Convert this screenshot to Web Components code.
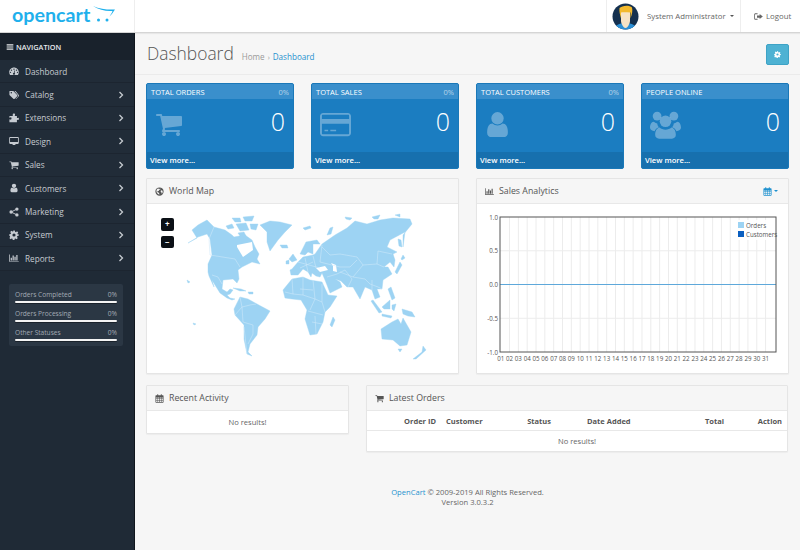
<!DOCTYPE html>
<html lang="en">
<head>
<meta charset="utf-8">
<title>Dashboard</title>
<style>
  html, body { margin: 0; height: 100%; overflow: hidden; }
  body { background: #f6f6f6; font: 7.6px "Open Sans", sans-serif; color: #666; }
</style>
</head>
<body>
<oc-app>
  <oc-header slot="header"></oc-header>
  <oc-sidebar slot="side">
    <nav-item icon="dashboard" plain>Dashboard</nav-item>
    <nav-item icon="tags">Catalog</nav-item>
    <nav-item icon="puzzle">Extensions</nav-item>
    <nav-item icon="desktop">Design</nav-item>
    <nav-item icon="cart">Sales</nav-item>
    <nav-item icon="user">Customers</nav-item>
    <nav-item icon="share">Marketing</nav-item>
    <nav-item icon="cog">System</nav-item>
    <nav-item icon="chart">Reports</nav-item>
    <stat-box slot="stats">
      <stat-row label="Orders Completed"></stat-row>
      <stat-row label="Orders Processing"></stat-row>
      <stat-row label="Other Statuses"></stat-row>
    </stat-box>
  </oc-sidebar>
  <page-head></page-head>
  <oc-dash>
    <oc-tile slot="tiles" heading="TOTAL ORDERS" percent="0%" icon="cart" size="28"></oc-tile>
    <oc-tile slot="tiles" heading="TOTAL SALES" percent="0%" icon="card" size="31"></oc-tile>
    <oc-tile slot="tiles" heading="TOTAL CUSTOMERS" percent="0%" icon="user" size="29" shift="-2"></oc-tile>
    <oc-tile slot="tiles" heading="PEOPLE ONLINE" icon="users" size="31"></oc-tile>
    <oc-panel slot="mid" heading="World Map" icon="globe"><world-map></world-map></oc-panel>
    <oc-panel slot="mid" heading="Sales Analytics" icon="chart" range><sales-chart></sales-chart></oc-panel>
    <oc-panel slot="left" heading="Recent Activity" icon="calendar"><no-results></no-results></oc-panel>
    <oc-panel slot="right" heading="Latest Orders" icon="cart"><orders-table></orders-table></oc-panel>
  </oc-dash>
  <oc-footer></oc-footer>
</oc-app>

<script>
const ICONS = {
  bars: '<path d="M2 4h20v3.6H2zM2 10.2h20v3.6H2zM2 16.4h20v3.6H2z"/>',
  dashboard: '<path fill-rule="evenodd" d="M12 3.500C5.600 3.500.5 8.700.5 15c0 2.200.6 4.200 1.700 6 .2.300.5.500.9.500h17.800c.4 0 .7-.2.900-.5 1.100-1.800 1.700-3.800 1.700-6 0-6.300-5.100-11.500-11.500-11.500zM12 6a1.600 1.600 0 1 1 0 3.200A1.600 1.600 0 0 1 12 6zM6 8.300a1.600 1.600 0 1 1 0 3.200 1.600 1.600 0 0 1 0-3.200zm12 0a1.600 1.600 0 1 1 0 3.200 1.600 1.600 0 0 1 0-3.200zM3.600 13.500a1.600 1.600 0 1 1 0 3.200 1.600 1.600 0 0 1 0-3.200zm16.800 0a1.600 1.600 0 1 1 0 3.200 1.600 1.600 0 0 1 0-3.200zM12.900 10.500l1.700.5-1.300 5.200c.8.500 1.200 1.300 1.200 2.300 0 1.400-1.100 2.500-2.500 2.500s-2.500-1.100-2.500-2.500 1-2.400 2.300-2.500z"/>',
  tags: '<path fill-rule="evenodd" d="M1 3.500v7.200c0 .7.300 1.300.7 1.700l8.700 8.700c.9.900 2.300.9 3.200 0l6-6c.9-.9.900-2.300 0-3.200L11 3.200c-.5-.4-1.100-.7-1.700-.7H2c-.6 0-1 .4-1 1zM5.500 5a1.800 1.800 0 1 1 0 3.600 1.800 1.800 0 0 1 0-3.600z"/><path d="M13 2.500h1.500c.7 0 1.300.3 1.700.7l7.300 8.700c.7.900.7 2.200 0 3.100l-5.800 6c-.6.600-1.300.7-2.200.5l5.700-6.100c1-1.100 1-2.500 0-3.600z"/>',
  puzzle: '<path d="M9 3.500c0-1.300 1.300-2.200 2.800-2.200s2.800.9 2.800 2.200c0 .9-.9 1.500-.9 2.400 0 .6.500 1 1.300 1H19v4c0 .8.400 1.200 1 1.200.9 0 1.300-.8 2.200-.8 1 0 1.600 1.200 1.600 2.700s-.6 2.700-1.600 2.700c-.9 0-1.300-.8-2.200-.8-.6 0-1 .4-1 1.200V22H1v-5.700c0-.8.400-1.300 1-1.300.9 0 1.300.9 2.200.9 1.100 0 1.800-1.200 1.800-2.700S5.300 10.400 4.200 10.400c-.9 0-1.300.9-2.200.9-.6 0-1-.5-1-1.300V6.900h7c.8 0 1.300-.4 1.300-1 0-.9-.3-1.500-.3-2.400z"/>',
  desktop: '<path fill-rule="evenodd" d="M2.500 2.500h19c1.100 0 2 .9 2 2v12.500c0 1.100-.9 2-2 2H15c0 .9.300 1.500 1 2.500H8c.7-1 1-1.600 1-2.500H2.500c-1.100 0-2-.9-2-2V4.500c0-1.100.9-2 2-2zM2.500 4.500v10h19v-10z"/>',
  cart: '<path transform="scale(.0134)" d="M704 1536q0 52-38 90t-90 38-90-38-38-90 38-90 90-38 90 38 38 90zm896 0q0 52-38 90t-90 38-90-38-38-90 38-90 90-38 90 38 38 90zm128-1088v512q0 24-16.500 42.500t-40.500 21.500l-1044 122q13 60 13 70 0 16-24 64h920q26 0 45 19t19 45-19 45-45 19h-1024q-26 0-45-19t-19-45q0-11 8-31.500t16-36 21.500-40 15.500-29.500l-177-823h-204q-26 0-45-19t-19-45 19-45 45-19h256q16 0 28.500 6.500t19.500 15.500 13 24.500 8 26 5.500 29.500 4.500 26h1201q26 0 45 19t19 45z"/>',
  user: '<path transform="scale(.0134)" d="M1536 1399q0 109-62.500 187t-150.500 78h-854q-88 0-150.500-78t-62.500-187q0-85 8.500-160.500t31.500-152 58.500-131 94-89 134.500-34.500q131 128 313 128t313-128q76 0 134.500 34.500t94 89 58.500 131 31.500 152 8.500 160.500zm-256-887q0 159-112.500 271.500t-271.500 112.500-271.500-112.500-112.500-271.500 112.500-271.500 271.500-112.500 271.500 112.500 112.500 271.500z"/>',
  share: '<circle cx="19" cy="5" r="4"/><circle cx="19" cy="19" r="4"/><circle cx="5" cy="12" r="4"/><path d="M5 12 19 5M5 12l14 7" stroke="currentColor" stroke-width="2.2"/>',
  cog: '<path fill-rule="evenodd" d="M10 1h4l.6 3.300 1.900.8 2.800-1.900 2.800 2.800-1.900 2.800.8 1.900L23.300 10v4l-3.300.6-.8 1.900 1.900 2.800-2.800 2.800-2.800-1.900-1.900.8-.6 3.300h-4l-.6-3.300-1.900-.8-2.800 1.900-2.800-2.800 1.900-2.800-.8-1.900L.7 14v-4L4 9.400l.8-1.900-1.900-2.800 2.800-2.800 2.800 1.900 1.900-.8zM12 8.200a3.800 3.800 0 1 0 0 7.600 3.800 3.800 0 0 0 0-7.600z"/>',
  chart: '<path d="M.5 3.500h1.800v16h21.200v1.800H.5zM4 11.500h3v6.800H4zM8.500 6h3v12.300h-3zM13 9h3v9.300h-3zM17.500 4.500h3v13.800h-3z"/>',
  globe: '<path fill-rule="evenodd" d="M12 1a11 11 0 1 0 0 22 11 11 0 0 0 0-22zM8 3.700c1.500.3 2.700 1.100 3.500 1.400.8.200 1.800-.6 2.900-.3 1 .4.400 1.500-.7 2-1.200.5-2.700.4-3.200 1.400-.5 1 .5 1.800-.3 2.500-.9.700-2.300-.4-3.300.3-1 .7-.7 2.200.2 3 1 .8 2.500.2 3.400 1 .8.800.3 2 .9 3 .6 1 1.100 1.800.5 2.300-3.800-.6-7.200-3.600-7.800-7.500C3.300 8.600 5 5 8 3.700zm9.600 5c1-.5 2 .1 2.600 1.800.6 1.800.4 4-.5 5.800-.5 1-1.700 1.300-2.200.4-.5-.9.100-2-.5-3-.6-1-2-1-2.200-2.100-.2-1.100 1.400-2.300 2.800-2.900z"/>',
  calendar: '<path fill-rule="evenodd" d="M6 .8h2.500V3h7V.8H18V3h3c1 0 1.800.8 1.800 1.800v16.500c0 1-.8 1.800-1.800 1.800H3c-1 0-1.800-.8-1.800-1.800V4.800C1.200 3.800 2 3 3 3h3zM3.200 9v3h3.600V9zm5 0v3h3V9zm4.600 0v3h3V9zm4.600 0v3h3.400V9zM3.200 13.300v3h3.600v-3zm5 0v3h3v-3zm4.600 0v3h3v-3zm4.600 0v3h3.400v-3zM3.200 17.600v3.400h3.600v-3.400zm5 0v3.400h3v-3.400zm4.600 0v3.400h3v-3.400zm4.600 0v3.400h3.400v-3.400z"/>',
  signout: '<path d="M9.500 3.500v2.200H4c-.8 0-1.300.5-1.300 1.300v10c0 .8.500 1.300 1.300 1.300h5.500v2.200H4c-2 0-3.500-1.500-3.500-3.500V7c0-2 1.500-3.500 3.500-3.500zM15 5.500 23.500 12 15 18.500V15H8V9h7z"/>',
  card: '<path fill-rule="evenodd" d="M2.500 3h19C22.900 3 24 4.100 24 5.500v13c0 1.400-1.100 2.500-2.500 2.500h-19C1.100 21 0 19.900 0 18.500v-13C0 4.100 1.100 3 2.500 3zm-1 2v2.800h21V5c0-.3-.2-.5-.5-.5H2c-.3 0-.5.200-.5.500zm0 6.500V19c0 .3.200.5.500.5h20c.3 0 .5-.2.500-.5v-7.500zM3.500 16h2.800v1.300H3.500zm4.500 0h4.500v1.300H8z"/>',
  users: '<circle cx="5.500" cy="5.500" r="3.400"/><circle cx="18.500" cy="5.500" r="3.400"/><path d="M3 9.800c.6.600 1.500 1.200 2.500 1.200.2 1.300.6 2.300 1.300 3.200-1.600.6-2.700 1.700-3.200 3C1.500 17 0 16 0 14.300c0-1.800.8-4.500 3-4.500zm18 0c2.200 0 3 2.700 3 4.500 0 1.700-1.500 2.700-3.600 2.900-.5-1.300-1.600-2.400-3.200-3 .7-.9 1.100-1.900 1.300-3.200 1 0 1.900-.6 2.500-1.200z"/><circle cx="12" cy="9.500" r="4.500"/><path d="M7.500 14.300c1 1 2.700 1.700 4.500 1.700s3.500-.7 4.500-1.700c2.500.5 3.500 3 3.500 5.700 0 1.900-1.300 3-3 3H7c-1.700 0-3-1.100-3-3 0-2.700 1-5.200 3.500-5.700z"/>'
};

class FaIcon extends HTMLElement {
  connectedCallback() {
    let size = this.getAttribute("size") || 10;
    this.attachShadow({ mode: "open" }).innerHTML = `
      <style>
        :host { display: inline-flex; width: ${size}px; height: ${size}px; flex: none; }
        svg { width: 100%; height: 100%; fill: currentColor; display: block; }
      </style>
      <svg viewBox="0 0 24 24">${ICONS[this.getAttribute("name")] || ""}</svg>`;
  }
}
customElements.define("fa-icon", FaIcon);

class OcApp extends HTMLElement {
  constructor() {
    super();
    this.attachShadow({ mode: "open" }).innerHTML = `
      <style>
        :host { display: grid; grid-template: 33px 517px / 135px 665px; width: 800px; height: 550px; }
        .head { grid-column: 1 / 3; }
        .side { display: flex; min-height: 0; }
        main { min-width: 0; display: flex; flex-direction: column; }
      </style>
      <div class="head"><slot name="header"></slot></div>
      <div class="side"><slot name="side"></slot></div>
      <main><slot></slot></main>`;
  }
}
customElements.define("oc-app", OcApp);

class OcHeader extends HTMLElement {
  constructor() {
    super();
    this.attachShadow({ mode: "open" }).innerHTML = `
      <style>
        :host { display: flex; height: 33px; box-sizing: border-box; background: #fff; border-bottom: 1px solid #d5d5d5; box-shadow: 0 1px 1px rgba(0,0,0,.06); position: relative; z-index: 2; align-items: stretch; }
        .logo { width: 135px; box-sizing: border-box; border-right: 1px solid #eee; padding-left: 12px; display: flex; align-items: center; gap: 1px; }
        .word { font: 700 19.7px/1 Lato, sans-serif; color: #1fb0ec; margin-top: -2px; }
        .logo svg { width: 24px; height: 18px; margin: -4px 0 0 1px; }
        .spacer { flex: 1; }
        .user { width: 135px; box-sizing: border-box; border-left: 1px solid #eee; border-right: 1px solid #eee; display: flex; align-items: center; padding-left: 5px; font-size: 7.8px; color: #666; white-space: nowrap; }
        .user svg { width: 27px; height: 27px; margin-right: 8px; flex: none; }
        .caret { width: 0; height: 0; border: 2.5px solid transparent; border-top-color: #555; border-bottom: 0; margin-left: 4px; }
        .logout { width: 59px; display: flex; align-items: center; gap: 1px; padding-left: 13px; box-sizing: border-box; font-size: 7.8px; color: #666; white-space: nowrap; }
      </style>
      <div class="logo">
        <span class="word">opencart</span>
        <svg viewBox="0 0 24 18">
          <path d="M1 1C8 4 16 5 23 4.500 21 7.500 19.500 9.500 17.500 11.500 19 9 20 7.500 20.500 6 14 6.500 7 5 1 1Z" fill="#1fb0ec"/>
          <circle cx="6.500" cy="15" r="1.500" fill="#1fb0ec"/><circle cx="15" cy="15" r="1.500" fill="#1fb0ec"/>
        </svg>
      </div>
      <div class="spacer"></div>
      <div class="user">
        <svg viewBox="0 0 27 27">
          <defs><clipPath id="av"><circle cx="13.500" cy="13.500" r="13"/></clipPath></defs>
          <g clip-path="url(#av)">
            <rect width="27" height="27" fill="#14304f"/>
            <path d="M2 27c1-5 5-7 11.500-7S24 22 25 27z" fill="#2a8fd6"/>
            <path d="M9 9h9v9c0 2-1 3-1.500 4.500-1 1.500-1.500 2.500-3 2.500s-2-1-3-2.500C10 21 9 20 9 18z" fill="#f6e3c5"/>
            <path d="M7.500 5c2-2.500 10-3.500 12.500-.5 .8 3 .2 6.500-1.500 11V9.500c-3 0-7-.5-9.500 0v6C8 12 7 8 7.500 5z" fill="#f2b92d"/>
          </g>
        </svg>
        System Administrator<span class="caret"></span>
      </div>
      <div class="logout"><fa-icon name="signout" size="9"></fa-icon>&nbsp;Logout</div>`;
  }
}
customElements.define("oc-header", OcHeader);

class OcSidebar extends HTMLElement {
  constructor() {
    super();
    this.attachShadow({ mode: "open" }).innerHTML = `
      <style>
        :host { display: flex; flex-direction: column; width: 134px; background: #1f2a36; border-right: 1px solid #10161d; color: #c4c9cf; }
        .title { height: 27px; flex: none; background: #19222c; color: #e8eaec; display: flex; align-items: center; gap: 2px; padding-left: 6px; font-size: 7.3px; font-weight: 600; }
        .stats { padding: 13.4px 11px 0 9px; }
      </style>
      <div class="title"><fa-icon name="bars" size="8"></fa-icon>NAVIGATION</div>
      <slot></slot>
      <div class="stats"><slot name="stats"></slot></div>`;
  }
}
customElements.define("oc-sidebar", OcSidebar);

class NavItem extends HTMLElement {
  connectedCallback() {
    let arrow = this.hasAttribute("plain") ? "" : `<svg class="arrow" viewBox="0 0 6 8"><path d="M1.500 1 4.500 4 1.500 7" fill="none" stroke="currentColor" stroke-width="1.300"/></svg>`;
    this.attachShadow({ mode: "open" }).innerHTML = `
      <style>
        :host { display: flex; align-items: center; height: 23.4px; box-sizing: border-box; padding: 0 10px 0 9px; background: #212c38; border-bottom: 1px solid #1c2530; font-size: 8.2px; color: #c6cbd1; }
        fa-icon { margin-right: 6px; }
        .label { flex: 1; }
        .arrow { width: 6px; height: 8px; }
      </style>
      <fa-icon name="${this.getAttribute("icon")}" size="10"></fa-icon>
      <span class="label"><slot></slot></span>${arrow}`;
  }
}
customElements.define("nav-item", NavItem);

class StatBox extends HTMLElement {
  constructor() {
    super();
    this.attachShadow({ mode: "open" }).innerHTML = `
      <style>
        :host { display: flex; flex-direction: column; gap: 5px; background: #2b3744; border-radius: 2px; padding: 5.5px 6px 5px; }
      </style><slot></slot>`;
  }
}
customElements.define("stat-box", StatBox);

class StatRow extends HTMLElement {
  connectedCallback() {
    this.attachShadow({ mode: "open" }).innerHTML = `
      <style>
        :host { display: block; font-size: 6.6px; color: #a3abb4; }
        .line { display: flex; justify-content: space-between; line-height: 11px; }
        .bar { height: 2px; background: #f4f4f4; border-radius: 1px; margin-top: 1px; box-shadow: 0 1px 0 #1a222b; }
      </style>
      <div class="line"><span>${this.getAttribute("label")}</span><span>0%</span></div>
      <div class="bar"></div>`;
  }
}
customElements.define("stat-row", StatRow);

class PageHead extends HTMLElement {
  constructor() {
    super();
    this.attachShadow({ mode: "open" }).innerHTML = `
      <style>
        :host { display: flex; align-items: center; height: 42px; box-sizing: border-box; padding: 1px 11px 0 12px; background: #f6f6f6; border-bottom: 1px solid #ebebeb; }
        h1 { margin: 0 8px 0 0; font: 300 17.4px/1 "Open Sans", sans-serif; color: #555; }
        .crumb { font-size: 8.1px; color: #999; flex: 1; margin-top: 5px; }
        .crumb a { color: #1e91cf; }
        .crumb i { font-style: normal; margin: 0 3px; font-size: 7px; }
        .btn { width: 23px; height: 21px; background: #4eb2d3; border: 1px solid #3ea3c6; border-radius: 2px; box-sizing: border-box; display: flex; align-items: center; justify-content: center; color: #fff; }
      </style>
      <h1>Dashboard</h1>
      <div class="crumb">Home<i>›</i><a>Dashboard</a></div>
      <div class="btn"><fa-icon name="cog" size="7"></fa-icon></div>`;
  }
}
customElements.define("page-head", PageHead);

class OcDash extends HTMLElement {
  constructor() {
    super();
    this.attachShadow({ mode: "open" }).innerHTML = `
      <style>
        :host { display: flex; flex-direction: column; padding: 8px 11px 0; gap: 9px; }
        .tiles { display: grid; grid-template-columns: repeat(4, 148px); gap: 17px; }
        .mid { display: grid; grid-template-columns: 313px 313px; gap: 17px; }
        .low { display: grid; grid-template-columns: 203px 422px; gap: 17px; margin-top: 2px; align-items: start; }
      </style>
      <div class="tiles"><slot name="tiles"></slot></div>
      <div class="mid"><slot name="mid"></slot></div>
      <div class="low"><slot name="left"></slot><slot name="right"></slot></div>`;
  }
}
customElements.define("oc-dash", OcDash);

class OcTile extends HTMLElement {
  connectedCallback() {
    let pct = this.getAttribute("percent") || "";
    let shift = this.getAttribute("shift") || 0;
    this.attachShadow({ mode: "open" }).innerHTML = `
      <style>
        :host { display: flex; flex-direction: column; height: 86px; box-sizing: border-box; border: 1px solid #1a78b8; border-radius: 2px; background: #1b7dc1; color: #fff; overflow: hidden; }
        .top { height: 15px; display: flex; justify-content: space-between; align-items: center; padding: 0 4px; background: #3a8fcc; font-size: 7.5px; }
        .top b { font-weight: 400; opacity: .6; font-size: 7.5px; }
        .body { flex: 1; display: flex; align-items: center; justify-content: space-between; padding: 0 8px 3px; }
        fa-icon { color: rgba(255,255,255,.33); margin-left: ${shift}px; }
        .num { font-size: 25px; font-weight: 300; line-height: 1; margin-bottom: 5px; }
        .foot { height: 16px; background: #1770ae; display: flex; align-items: center; padding: 0 3px; font-size: 7.6px; font-weight: 600; }
      </style>
      <div class="top"><span>${this.getAttribute("heading")}</span><b>${pct}</b></div>
      <div class="body"><fa-icon name="${this.getAttribute("icon")}" size="${this.getAttribute("size")}"></fa-icon><span class="num">0</span></div>
      <div class="foot">View more...</div>`;
  }
}
customElements.define("oc-tile", OcTile);

class OcPanel extends HTMLElement {
  connectedCallback() {
    let range = this.hasAttribute("range") ? `<span class="range"><fa-icon name="calendar" size="9"></fa-icon><i></i></span>` : "";
    this.attachShadow({ mode: "open" }).innerHTML = `
      <style>
        :host { display: block; border: 1px solid #e5e5e5; background: #fff; border-radius: 1px; box-shadow: 0 1px 1px rgba(0,0,0,.04); }
        .head { display: flex; align-items: center; height: 24px; padding: 0 8px; background: #f6f6f6; border-bottom: 1px solid #e8e8e8; color: #555; font-size: 8.8px; gap: 5px; }
        .head span.t { flex: 1; }
        .range { color: #1e91cf; display: flex; align-items: center; gap: 2px; padding-right: 2px; }
        .range i { width: 0; height: 0; border: 2.5px solid transparent; border-top-color: #1e91cf; border-bottom: 0; }
      </style>
      <div class="head"><fa-icon name="${this.getAttribute("icon")}" size="9"></fa-icon><span class="t">${this.getAttribute("heading")}</span>${range}</div>
      <slot></slot>`;
  }
}
customElements.define("oc-panel", OcPanel);

// land and borders, in page pixels (the svg viewBox starts at the panel body corner)
const LAND = [
  "M188 243 197 238 192 230 198 225 207 220 214 227 225 230 232 235 234 237 245 235 252 240 255 247 259 254 257 259 260 264 252 262 242 267 238 270 239 279 237 283 233 279 223 280 222 289 227 292 230 289 233 290 230 294 227 295 230 298 235 299 232 300 227 298 220 293 215 285 212 280 214 287 209 276 208 272 208 264 212 255 210 239 207 234 198 237Z",
  "M260 225 270 221 280 222 292 225 285 232 278 240 270 251 267 242 267 232Z",
  "M234 309 240 297 248 299 257 304 270 311 265 319 258 327 257 335 250 344 248 352 252 356 247 354 244 339 244 325 235 315Z",
  "M283 290 292 279 303 277 310 280 322 282 328 295 337 296 330 307 325 312 323 322 317 334 310 335 305 319 307 310 301 300 292 299 285 298Z",
  "M290 270 291 275 298 275 303 269 308 272 311 277 312 273 316 276 320 277 322 273 325 280 327 285 330 293 334 291 342 287 340 282 335 279 341 281 347 287 353 287 360 299 365 287 372 290 375 299 380 297 377 289 382 289 383 280 392 274 388 267 384 267 390 262 394 267 395 260 393 254 397 252 387 247 390 240 405 232 403 247 403 235 412 224 410 219 393 218 380 220 367 224 355 221 347 228 335 235 322 244 315 254 313 255 303 257 298 262 292 269Z",
  "M300 254 306 242 317 240 320 244 313 244 313 254 308 252 305 255Z",
  "M289 259 293 254 297 260 292 262Z",
  "M286 261 289 260 289 264 286 264Z",
  "M280 245 287 245 288 248 282 248Z",
  "M381 329 392 322 398 319 401 324 403 318 411 332 407 345 400 346 393 340 382 339Z",
  "M398 349 402 349 400 352Z",
  "M413 359 422 352 423 346 426 350 416 359Z",
  "M395 272 400 262 402 265 397 274Z",
  "M401 259 403 255 405 258 402 260Z",
  "M398 239 401 240 402 247 399 246Z",
  "M330 325 333 317 335 320 332 327Z",
  "M371 301 373 300 382 312 379 313Z",
  "M382 314 392 316 391 318 382 316Z",
  "M382 307 390 300 390 309 384 309Z",
  "M392 305 396 304 394 311 392 309Z",
  "M402 309 412 312 415 317 408 316 403 314Z",
  "M388 289 391 287 395 298 392 300Z",
  "M233 288 241 289 246 291 240 291Z",
  "M248 292 253 292 253 294 249 294Z",
  "M303 228 310 226 311 228 305 230Z",
  "M327 235 330 228 333 227 331 234Z",
  "M345 217 352 218 350 220 346 219Z",
  "M372 217 380 215 378 219 374 219Z",
  "M395 215 400 214 400 217Z",
  "M226 226 232 224 234 228 228 229Z",
  "M232 218 240 218 241 222 235 222Z",
  "M243 217 254 216 252 221 245 221Z",
  "M236 224 246 223 249 230 240 231Z",
  "M250 224 258 224 256 230 251 229Z",
  "M238 233 244 232 246 236 240 236Z",
  "M187 280 190 282 188 283Z",
  "M193 323 196 324 194 325Z"
];
const WATER = [
  "M237 245 252 242 253 250 243 257 237 247Z",
  "M316 268 325 266 328 270 320 272Z",
  "M331 263 336 265 337 272 333 271 333 266Z"
];
const BORDERS = [
  "M214 227 209 239 210 255 235 259 240 267",
  "M212 275 218 277 222 284",
  "M240 297 242 307 235 315", "M242 307 250 305 256 304", "M243 322 253 325 253 334 248 344", "M244 327 247 354", "M242 307 243 322",
  "M292 279 293 294 285 292", "M303 277 303 295 293 294", "M313 280 315 299 303 295", "M322 284 322 302 315 299",
  "M315 299 310 310", "M322 302 325 312", "M308 311 323 315", "M312 322 322 324", "M315 316 316 334", "M300 289 313 290",
  "M298 262 320 268", "M305 258 308 272", "M313 256 316 268", "M322 245 320 262", "M300 268 313 262",
  "M340 254 357 257 363 265 377 264 378 251 392 254",
  "M322 247 330 255 340 254", "M340 267 350 267 357 260", "M340 272 353 277 365 279 370 284 378 287 382 289",
  "M337 274 345 270 352 279 348 287", "M327 277 337 274", "M320 262 340 267", "M363 265 353 277", "M377 264 384 267",
  "M372 290 372 280"
];

class WorldMap extends HTMLElement {
  constructor() {
    super();
    let draw = (list) => list.map((d) => `<path d="${d}"/>`).join("");
    this.attachShadow({ mode: "open" }).innerHTML = `
      <style>
        :host { display: block; position: relative; height: 169px; overflow: hidden; }
        svg { display: block; width: 311px; height: 169px; }
        .zoom { position: absolute; left: 14px; top: 14px; display: flex; flex-direction: column; gap: 5px; }
        .zoom b { width: 12.5px; height: 12.5px; background: #0b1016; border-radius: 2px; color: #fff; font: 700 8px/12.5px "Open Sans", sans-serif; text-align: center; }
      </style>
      <svg viewBox="147 204 311 169">
        <g fill="#9dd3f3" stroke="#9dd3f3" stroke-width=".4" stroke-linejoin="round">${draw(LAND)}</g>
        <g fill="#fff">${draw(WATER)}</g>
        <g fill="none" stroke="#cfe9f9" stroke-width=".55">${draw(BORDERS)}</g>
      </svg>
      <div class="zoom"><b>+</b><b>−</b></div>`;
  }
}
customElements.define("world-map", WorldMap);

class SalesChart extends HTMLElement {
  constructor() {
    super();
    let L = 23, R = 299, T = 13, B = 148, step = 8.83;
    let grid = "", labels = "";
    for (let i = 1; i <= 31; i++) {
      let x = L + 0.7 + (i - 1) * step;
      if (i > 1) grid += `<path d="M${x} ${T}V${B}"/>`;
      labels += `<text x="${x}" y="${B + 9}" text-anchor="middle">${String(i).padStart(2, "0")}</text>`;
    }
    ["1.0", "0.5", "0.0", "-0.5", "-1.0"].forEach((v, i) => {
      let y = T + i * (B - T) / 4;
      if (i && i < 4) grid += `<path d="M${L} ${y}H${R}"/>`;
      labels += `<text x="${L - 2}" y="${y + 2.5}" text-anchor="end">${v}</text>`;
    });
    this.attachShadow({ mode: "open" }).innerHTML = `
      <style>
        :host { display: block; height: 169px; }
        svg { display: block; width: 311px; height: 169px; font: 6.2px "Open Sans", sans-serif; }
        text { fill: #555; }
      </style>
      <svg viewBox="0 0 311 169">
        <g stroke="#ececec" stroke-width="1" fill="none">${grid}</g>
        <path d="M${L} ${(T + B) / 2}H${R}" fill="none" stroke="#5ea8da" stroke-width="1"/>
        <rect x="${L}" y="${T}" width="${R - L}" height="${B - T}" fill="none" stroke="#555" stroke-width="1"/>
        <rect x="260" y="16" width="37" height="20" fill="#fff" fill-opacity=".85"/>
        <rect x="261" y="18" width="6" height="6" fill="#9dd3f3"/>
        <rect x="261" y="27" width="6" height="6" fill="#0b5fc0"/>
        <text x="269" y="23.5">Orders</text>
        <text x="269" y="32.5">Customers</text>
        ${labels}
      </svg>`;
  }
}
customElements.define("sales-chart", SalesChart);

class NoResults extends HTMLElement {
  constructor() {
    super();
    this.attachShadow({ mode: "open" }).innerHTML = `
      <style>:host { display: block; height: 22px; line-height: 22px; text-align: center; font-size: 7.6px; color: #666; }</style>
      No results!`;
  }
}
customElements.define("no-results", NoResults);

class OrdersTable extends HTMLElement {
  constructor() {
    super();
    this.attachShadow({ mode: "open" }).innerHTML = `
      <style>
        :host { display: block; }
        table { width: 100%; table-layout: fixed; border-collapse: collapse; font-size: 7.5px; color: #555; }
        th { height: 19px; padding: 0 5px; font-weight: 700; border-bottom: 1px solid #e8e8e8; text-align: left; }
        td { height: 20px; text-align: center; padding: 0; color: #666; font-size: 7.6px; }
        .r { text-align: right; }
      </style>
      <table>
        <colgroup><col style="width:74px"><col style="width:60px"><col style="width:55px"><col style="width:85px"><col style="width:88px"><col style="width:58px"></colgroup>
        <tr><th class="r">Order ID</th><th>Customer</th><th class="r">Status</th><th style="padding-left:31px">Date Added</th><th class="r">Total</th><th class="r">Action</th></tr>
        <tr><td colspan="6">No results!</td></tr>
      </table>`;
  }
}
customElements.define("orders-table", OrdersTable);

class OcFooter extends HTMLElement {
  constructor() {
    super();
    this.attachShadow({ mode: "open" }).innerHTML = `
      <style>
        :host { display: block; text-align: center; font-size: 7.6px; line-height: 10.3px; color: #666; padding-top: 35px; }
        a { color: #1e91cf; }
      </style>
      <a>OpenCart</a> © 2009-2019 All Rights Reserved.<br>Version 3.0.3.2`;
  }
}
customElements.define("oc-footer", OcFooter);
</script>
</body>
</html>
